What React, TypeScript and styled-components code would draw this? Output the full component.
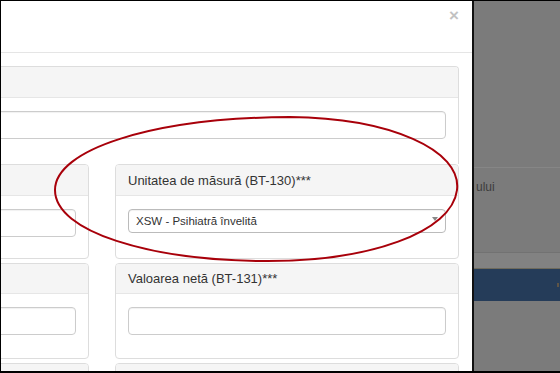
import styled, { createGlobalStyle } from 'styled-components';

const GlobalStyle = createGlobalStyle`
  html, body {
    margin: 0;
    padding: 0;
    background: #7b7b7b;
    overflow: hidden;
  }
  body {
    font-family: "Liberation Sans", Arial, sans-serif;
    color: #333;
  }
`;

const Frame = styled.div`
  position: relative;
  width: 560px;
  height: 373px;
  box-sizing: border-box;
  border-top: 1px solid #000;
  border-left: 1px solid #000;
  border-bottom: 2px solid #000;
  display: flex;
  overflow: hidden;
  background: #7b7b7b;
`;

const Modal = styled.div`
  width: 473px;
  flex: none;
  box-sizing: border-box;
  background: #fff;
  border-right: 2px solid #111;
  display: flex;
  flex-direction: column;
  overflow: hidden;
`;

const ModalHeader = styled.div`
  height: 52px;
  flex: none;
  border-bottom: 1px solid #e5e5e5;
  display: flex;
  justify-content: flex-end;
  align-items: flex-start;
  padding: 6px 13px 0 0;
  box-sizing: border-box;
`;

const Close = styled.span`
  font-size: 17px;
  font-weight: bold;
  line-height: 1;
  color: #c2c2c2;
`;

/* the modal is cropped on the left in the shot, so the body starts off-screen */
const ModalBody = styled.div`
  padding: 13px 13px 0 0;
  margin-left: -24px;
`;

const Panel = styled.div`
  border: 1px solid #ddd;
  border-radius: 4px;
  background: #fff;
  box-sizing: border-box;
  overflow: hidden;
`;

const OuterPanel = styled(Panel)`
  height: 98px;
  border-bottom: none;
  border-radius: 4px 4px 0 0;
`;

const PanelHeading = styled.div<{ $h?: number }>`
  height: ${(p) => p.$h ?? 30}px;
  background: #f5f5f5;
  border-bottom: 1px solid #e6e6e6;
  box-sizing: border-box;
  display: flex;
  align-items: center;
  padding-left: 12px;
  font-size: 13px;
  color: #333;
  white-space: nowrap;
`;

const PanelBody = styled.div<{ $pb?: number }>`
  padding: 13px 12px ${(p) => p.$pb ?? 21}px 12px;
`;

const Input = styled.div`
  height: 28px;
  box-sizing: border-box;
  border: 1px solid #ccc;
  border-radius: 4px;
  background: #fff;
  box-shadow: inset 0 1px 1px rgba(0, 0, 0, 0.06);
`;

const Select = styled(Input)`
  height: 24px;
  display: flex;
  align-items: center;
  justify-content: space-between;
  padding: 0 7px;
  font-size: 11.5px;
  color: #333;
  border-color: #bbb;
`;

const Caret = styled.span`
  width: 0;
  height: 0;
  border-left: 3px solid transparent;
  border-right: 3px solid transparent;
  border-top: 4px solid #888;
  margin-top: -4px;
`;

const Grid = styled.div`
  display: grid;
  grid-template-columns: 112px 344px;
  column-gap: 26px;
  row-gap: 4px;
`;

const FieldPanel = styled(Panel)<{ $h: number }>`
  height: ${(p) => p.$h}px;
`;

const Backdrop = styled.div`
  flex: 1;
  display: flex;
  flex-direction: column;
  background: #7b7b7b;
`;

const BackTop = styled.div`
  height: 166px;
  border-bottom: 1px solid #868686;
  flex: none;
`;

const BackText = styled.div`
  height: 85px;
  padding: 12px 0 0 2px;
  box-sizing: border-box;
  font-size: 12px;
  color: #3d3d3d;
  border-bottom: 1px solid #727272;
`;

const BackStrip = styled.div`
  height: 15px;
  background: #828282;
  border-bottom: 1px solid #6e6a5c;
`;

const NavyBand = styled.div`
  height: 32px;
  background: #253c59;
  display: flex;
  justify-content: flex-end;
  align-items: center;
  padding-right: 1px;
`;

const Dot = styled.span`
  width: 2px;
  height: 4px;
  background: #5e5446;
`;

const Annotation = styled.svg`
  position: absolute;
  left: -1px;
  top: -1px;
  pointer-events: none;
`;

export default function App() {
  return (
    <>
      <GlobalStyle />
      <Frame>
        <Modal>
          <ModalHeader>
            <Close>×</Close>
          </ModalHeader>
          <ModalBody>
            <OuterPanel>
              <PanelHeading $h={31} />
              <PanelBody>
                <Input />
              </PanelBody>
            </OuterPanel>
            <Grid>
              <FieldPanel $h={95}>
                <PanelHeading $h={31} />
                <PanelBody>
                  <Input />
                </PanelBody>
              </FieldPanel>
              <FieldPanel $h={95}>
                <PanelHeading $h={31}>Unitatea de măsură (BT-130)***</PanelHeading>
                <PanelBody>
                  <Select>
                    <span>XSW - Psihiatră învelită</span>
                    <Caret />
                  </Select>
                </PanelBody>
              </FieldPanel>
              <FieldPanel $h={96}>
                <PanelHeading />
                <PanelBody>
                  <Input />
                </PanelBody>
              </FieldPanel>
              <FieldPanel $h={96}>
                <PanelHeading>Valoarea netă (BT-131)***</PanelHeading>
                <PanelBody>
                  <Input />
                </PanelBody>
              </FieldPanel>
              <FieldPanel $h={96}>
                <PanelHeading />
              </FieldPanel>
              <FieldPanel $h={96}>
                <PanelHeading>Cota de TVA (BT-152)***</PanelHeading>
              </FieldPanel>
            </Grid>
          </ModalBody>
        </Modal>
        <Backdrop>
          <BackTop />
          <BackText>ului</BackText>
          <BackStrip />
          <NavyBand>
            <Dot />
          </NavyBand>
        </Backdrop>
        <Annotation width="560" height="373" viewBox="0 0 560 373">
          <path
            d="M 290 117 C 390 118, 462 150, 457 190 C 452 232, 370 262, 262 261 C 150 260, 55 232, 55 190 C 55 150, 150 118, 290 117 Z"
            fill="none"
            stroke="#a8000a"
            strokeWidth="2"
          />
        </Annotation>
      </Frame>
    </>
  );
}
